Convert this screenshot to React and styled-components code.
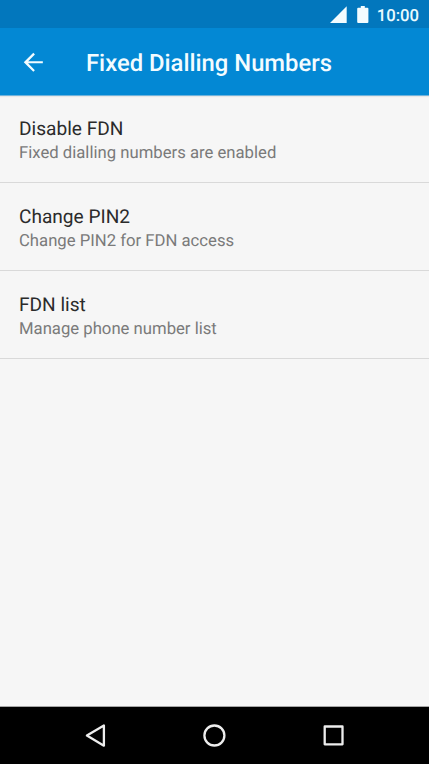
import React from "react";
import styled, { createGlobalStyle } from "styled-components";

const GlobalStyle = createGlobalStyle`
  * { box-sizing: border-box; }
  body {
    margin: 0;
    background: #f6f6f6;
    font-family: Roboto, sans-serif;
    text-rendering: geometricPrecision;
  }
`;

const Screen = styled.div`
  display: flex;
  flex-direction: column;
  width: 429px;
  height: 764px;
  overflow: hidden;
  background: #f6f6f6;
`;

const StatusBar = styled.div`
  display: flex;
  flex: none;
  align-items: center;
  justify-content: flex-end;
  height: 28px;
  padding: 2px 10px 0 0;
  background: #0277bd;
  color: #e9fbff;
`;

const StatusIcon = styled.svg`
  display: block;
  width: ${(p) => p.$width}px;
  height: 18px;
  margin-right: ${(p) => p.$gap}px;
  fill: #f3fcff;
`;

const Clock = styled.span`
  padding-top: 3px;
  font-size: 16.7px;
  font-weight: 500;
  line-height: 23px;
`;

const AppBar = styled.header`
  display: flex;
  flex: none;
  align-items: center;
  height: 68px;
  padding-left: 19px;
  background: #0388d4;
  color: #f3fcff;
  border-bottom: 1px solid #6fb3dc;
  box-shadow: 0 1px 1px rgba(0, 0, 0, 0.06);
`;

const BackButton = styled.button`
  display: flex;
  width: 67px;
  padding: 1px 0 0;
  border: 0;
  background: none;
`;

const Title = styled.h1`
  margin: 3px 0 0;
  font-size: 23.8px;
  font-weight: 500;
  line-height: 32px;
  white-space: nowrap;
`;

const SettingsList = styled.main`
  flex: 1;
  border-bottom: 1px solid #a6a6a6;
`;

const Row = styled.div`
  display: flex;
  flex-direction: column;
  gap: 1px;
  height: ${(p) => p.$height}px;
  padding: ${(p) => p.$top}px 19px 0;
  border-bottom: 1px solid #d9d9d9;
`;

const RowTitle = styled.span`
  color: #2b2b2b;
  font-size: 19.1px;
  line-height: 24px;
`;

const RowSummary = styled.span`
  color: #7a7a7a;
  font-size: 16.7px;
  line-height: 24px;
`;

const NavBar = styled.nav`
  display: grid;
  flex: none;
  grid-template-columns: repeat(3, 119px);
  justify-content: center;
  height: 57px;
  padding-right: 1px;
  background: #000;
`;

const NavButton = styled.button`
  display: flex;
  align-items: center;
  justify-content: center;
  padding: 0;
  border: 0;
  background: none;
`;

const NavIcon = styled.svg`
  display: block;
  width: 24px;
  height: 25px;
  fill: none;
  stroke: #ededed;
  stroke-width: 2.3;
  stroke-linejoin: round;
`;

const items = [
  { title: "Disable FDN", summary: "Fixed dialling numbers are enabled", height: 87, top: 21 },
  { title: "Change PIN2", summary: "Change PIN2 for FDN access", height: 88, top: 22 },
  { title: "FDN list", summary: "Manage phone number list", height: 88, top: 22 },
];

export default function App() {
  return (
    <Screen>
      <GlobalStyle />
      <StatusBar>
        <StatusIcon $width={17} $gap={10} viewBox="0 0 17 18"><path d="M0 17L16.7 .3V17z" /></StatusIcon>
        <StatusIcon $width={12} $gap={8} viewBox="0 0 12 18"><path d="M3.8 0h4v1.7h2.6q1 0 1 1V16q0 1-1 1H1.2q-1 0-1-1V2.7q0-1 1-1h2.6z" /></StatusIcon>
        <Clock>10:00</Clock>
      </StatusBar>
      <AppBar>
        <BackButton aria-label="Back">
          <svg width="28.6" height="28.6" viewBox="0 0 24 24" fill="#f3fcff">
            <path d="M20 11.1H7.73l5.63-5.63L12 4l-8 8 8 8 1.32-1.32L7.63 12.9H20v-1.8z" />
          </svg>
        </BackButton>
        <Title>Fixed Dialling Numbers</Title>
      </AppBar>
      <SettingsList>
        {items.map((item) => (
          <Row key={item.title} $height={item.height} $top={item.top}>
            <RowTitle>{item.title}</RowTitle>
            <RowSummary>{item.summary}</RowSummary>
          </Row>
        ))}
      </SettingsList>
      <NavBar>
        <NavButton aria-label="Back">
          <NavIcon viewBox="0 0 24 25"><path d="M20.9 2.5v20.2L3.9 12.6z" /></NavIcon>
        </NavButton>
        <NavButton aria-label="Home">
          <NavIcon viewBox="0 0 24 25"><circle cx="12.4" cy="12.5" r="10" /></NavIcon>
        </NavButton>
        <NavButton aria-label="Recent apps">
          <NavIcon viewBox="0 0 24 25"><path d="M3.7 3.5h17.8v17.8H3.7z" /></NavIcon>
        </NavButton>
      </NavBar>
    </Screen>
  );
}
